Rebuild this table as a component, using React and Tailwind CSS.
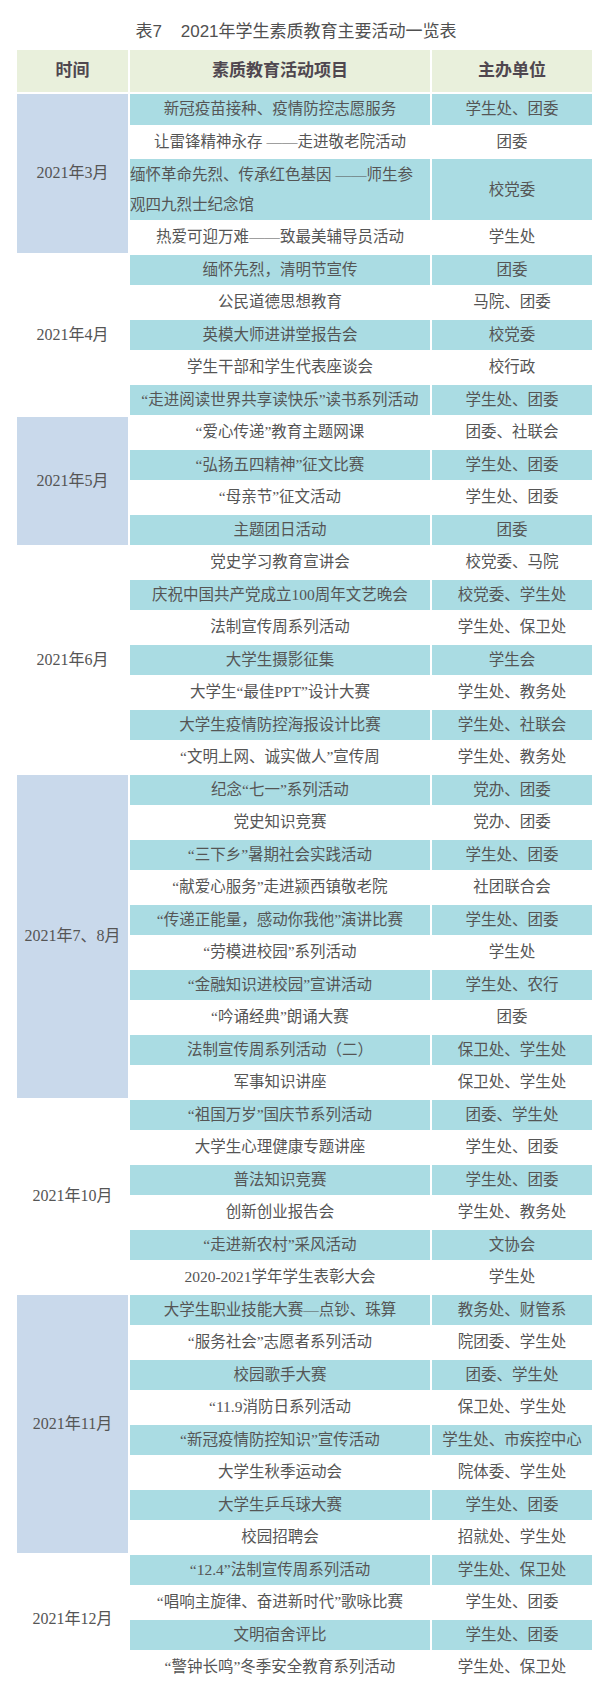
import React from "react";

const groups = [
  {
    month: "2021年3月",
    shaded: true,
    rows: [
      ["新冠疫苗接种、疫情防控志愿服务", "学生处、团委"],
      ["让雷锋精神永存 ——走进敬老院活动", "团委"],
      ["__double__", "校党委"],
      ["热爱可迎万难——致最美辅导员活动", "学生处"],
    ],
  },
  {
    month: "2021年4月",
    shaded: false,
    rows: [
      ["缅怀先烈，清明节宣传", "团委"],
      ["公民道德思想教育", "马院、团委"],
      ["英模大师进讲堂报告会", "校党委"],
      ["学生干部和学生代表座谈会", "校行政"],
      ["“走进阅读世界共享读快乐”读书系列活动", "学生处、团委"],
    ],
  },
  {
    month: "2021年5月",
    shaded: true,
    rows: [
      ["“爱心传递”教育主题网课", "团委、社联会"],
      ["“弘扬五四精神”征文比赛", "学生处、团委"],
      ["“母亲节”征文活动", "学生处、团委"],
      ["主题团日活动", "团委"],
    ],
  },
  {
    month: "2021年6月",
    shaded: false,
    rows: [
      ["党史学习教育宣讲会", "校党委、马院"],
      ["庆祝中国共产党成立100周年文艺晚会", "校党委、学生处"],
      ["法制宣传周系列活动", "学生处、保卫处"],
      ["大学生摄影征集", "学生会"],
      ["大学生“最佳PPT”设计大赛", "学生处、教务处"],
      ["大学生疫情防控海报设计比赛", "学生处、社联会"],
      ["“文明上网、诚实做人”宣传周", "学生处、教务处"],
    ],
  },
  {
    month: "2021年7、8月",
    shaded: true,
    rows: [
      ["纪念“七一”系列活动", "党办、团委"],
      ["党史知识竞赛", "党办、团委"],
      ["“三下乡”暑期社会实践活动", "学生处、团委"],
      ["“献爱心服务”走进颍西镇敬老院", "社团联合会"],
      ["“传递正能量，感动你我他”演讲比赛", "学生处、团委"],
      ["“劳模进校园”系列活动", "学生处"],
      ["“金融知识进校园”宣讲活动", "学生处、农行"],
      ["“吟诵经典”朗诵大赛", "团委"],
      ["法制宣传周系列活动（二）", "保卫处、学生处"],
      ["军事知识讲座", "保卫处、学生处"],
    ],
  },
  {
    month: "2021年10月",
    shaded: false,
    rows: [
      ["“祖国万岁”国庆节系列活动", "团委、学生处"],
      ["大学生心理健康专题讲座", "学生处、团委"],
      ["普法知识竞赛", "学生处、团委"],
      ["创新创业报告会", "学生处、教务处"],
      ["“走进新农村”采风活动", "文协会"],
      ["2020-2021学年学生表彰大会", "学生处"],
    ],
  },
  {
    month: "2021年11月",
    shaded: true,
    rows: [
      ["大学生职业技能大赛—点钞、珠算", "教务处、财管系"],
      ["“服务社会”志愿者系列活动", "院团委、学生处"],
      ["校园歌手大赛", "团委、学生处"],
      ["“11.9消防日系列活动", "保卫处、学生处"],
      ["“新冠疫情防控知识”宣传活动", "学生处、市疾控中心"],
      ["大学生秋季运动会", "院体委、学生处"],
      ["大学生乒乓球大赛", "学生处、团委"],
      ["校园招聘会", "招就处、学生处"],
    ],
  },
  {
    month: "2021年12月",
    shaded: false,
    rows: [
      ["“12.4”法制宣传周系列活动", "学生处、保卫处"],
      ["“唱响主旋律、奋进新时代”歌咏比赛", "学生处、团委"],
      ["文明宿舍评比", "学生处、团委"],
      ["“警钟长鸣”冬季安全教育系列活动", "学生处、保卫处"],
    ],
  },
];

export default function App() {
  let idx = 0;
  return (
    <div className="w-[604px] bg-white text-[#555555]">
      {/* caption */}
      <div className="h-[48px] pt-[22px] pr-[12px] text-center text-[17px] leading-[20px] text-[#505050] font-['Liberation_Sans','Noto_Sans_CJK_SC',sans-serif]">
        表7&nbsp;&nbsp;&nbsp;&nbsp;2021年学生素质教育主要活动一览表
      </div>

      <table className="ml-[15px] w-[579px] table-fixed border-separate border-spacing-[2px] text-[15.5px] font-['Liberation_Serif','Noto_Sans_CJK_SC',serif]">
        <colgroup>
          <col className="w-[111px]" />
          <col className="w-[300px]" />
          <col className="w-[160px]" />
        </colgroup>
        <thead>
          <tr className="h-[42px] bg-[#e9f0dc] text-[17px] font-bold text-[#4f474f] font-['Liberation_Sans','Noto_Sans_CJK_SC',sans-serif]">
            <th className="p-0 text-center">时间</th>
            <th className="p-0 text-center">素质教育活动项目</th>
            <th className="p-0 text-center">主办单位</th>
          </tr>
        </thead>
        <tbody>
          {groups.map((g) =>
            g.rows.map((r, i) => {
              const teal = idx % 2 === 0;
              idx += 1;
              const cellBg = teal ? "bg-[#aadce3]" : "bg-white";
              const isDouble = r[0] === "__double__";
              return (
                <tr
                  key={g.month + i}
                  className={isDouble ? "h-[61px]" : "h-[30.5px]"}
                >
                  {i === 0 && (
                    <td
                      rowSpan={g.rows.length}
                      className={`p-0 text-center align-middle text-[16px] ${
                        g.shaded ? "bg-[#c9d9eb]" : "bg-white"
                      }`}
                    >
                      {g.month}
                    </td>
                  )}
                  {isDouble ? (
                    <td className={`p-0 text-left leading-[30px] whitespace-nowrap ${cellBg}`}>
                      缅怀革命先烈、传承红色基因 ——师生参
                      <br />
                      观四九烈士纪念馆
                    </td>
                  ) : (
                    <td className={`p-0 text-center leading-[20px] whitespace-nowrap ${cellBg}`}>
                      {r[0]}
                    </td>
                  )}
                  <td className={`p-0 text-center leading-[20px] whitespace-nowrap ${cellBg}`}>
                    {r[1]}
                  </td>
                </tr>
              );
            })
          )}
        </tbody>
      </table>
    </div>
  );
}
